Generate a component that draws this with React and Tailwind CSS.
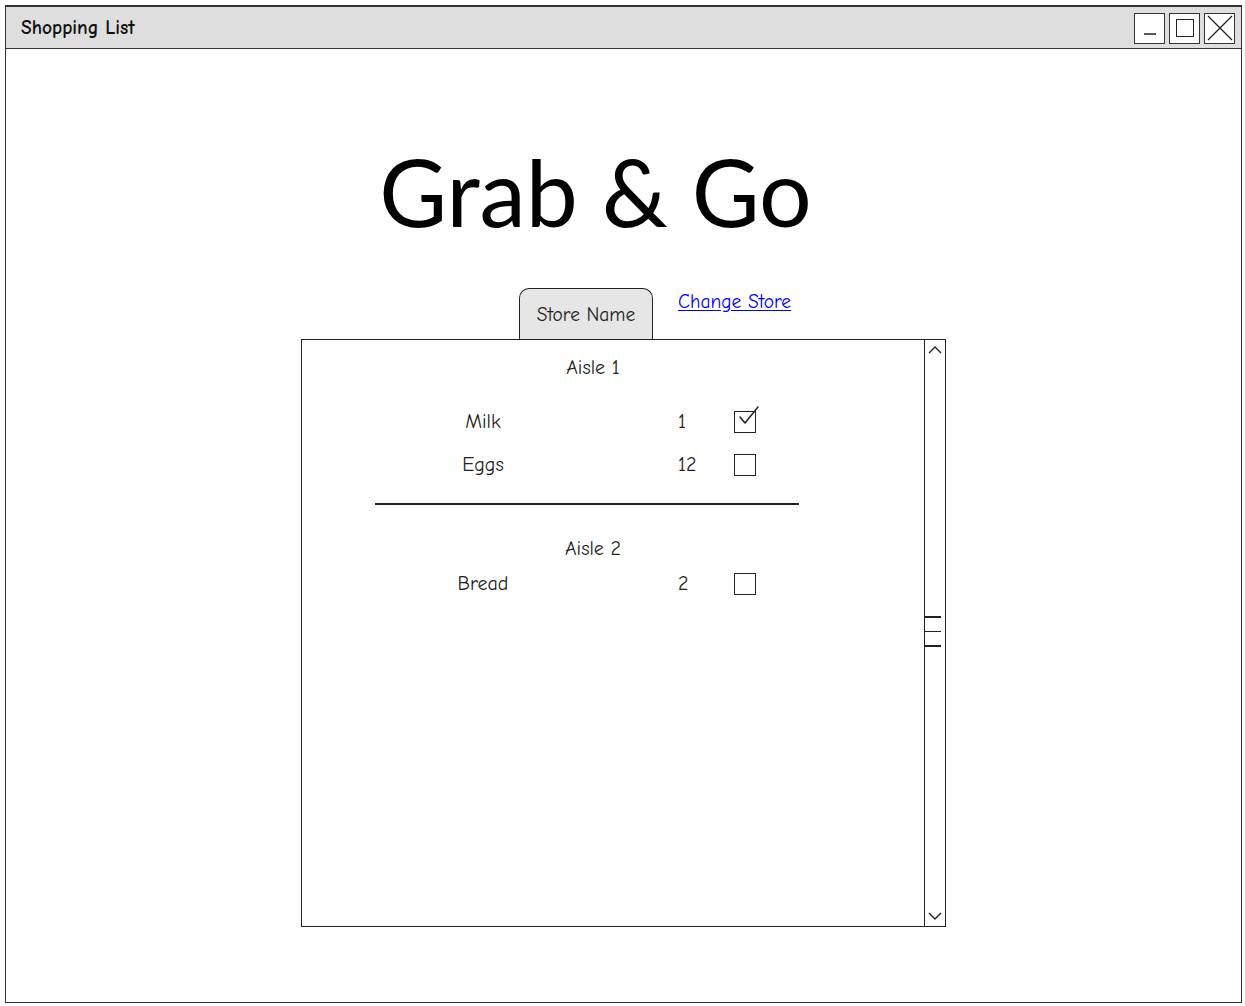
import React from "react";

const sketch = { fontFamily: '"Comic Sans MS", "Comic Neue", "DejaVu Sans", sans-serif' };

const Checkbox = ({ checked }) => (
  <div className="relative w-[22px] h-[22px] border-[1.5px] border-[#222] bg-white">
    {checked && (
      <svg className="absolute -top-[6px] left-[2px]" width="22" height="24" viewBox="0 0 22 24" fill="none">
        <path d="M3 11 L8 17 L21 1" stroke="#222" strokeWidth="1.5" strokeLinecap="round" strokeLinejoin="round" />
      </svg>
    )}
  </div>
);

const Item = ({ name, qty, checked }) => (
  <div className="flex items-center h-[43px] text-[20px] text-[#222]">
    <div className="w-[216px] text-center">{name}</div>
    <div className="w-[56px] ml-[87px]">{qty}</div>
    <Checkbox checked={checked} />
  </div>
);

const WinButton = ({ children }) => (
  <div className="w-[31px] h-[31px] border-[1.5px] border-[#333] bg-white flex items-center justify-center">
    {children}
  </div>
);

export default function App() {
  return (
    <div className="w-[1245px] h-[1006px] bg-white pt-[5px] pl-[5px] pr-[3px] pb-[3px]" style={sketch}>
      <div className="h-full border border-[#333] border-t-2 flex flex-col">
        {/* Title bar */}
        <div className="h-[42px] bg-[#dedede] border-b border-[#333] flex items-center justify-between pl-[15px] pr-[6px]">
          <span className="text-[19.5px] font-bold text-[#111]">Shopping List</span>
          <div className="flex gap-[4px] pt-[1px]">
            <WinButton>
              <svg width="20" height="20" viewBox="0 0 20 20">
                <path d="M4 16 H16" stroke="#222" strokeWidth="1.5" />
              </svg>
            </WinButton>
            <WinButton>
              <div className="w-[18px] h-[18px] border-[1.5px] border-[#222]" />
            </WinButton>
            <WinButton>
              <svg width="28" height="28" viewBox="0 0 28 28">
                <path d="M2 2 L26 26 M26 2 L2 26" stroke="#222" strokeWidth="1.3" />
              </svg>
            </WinButton>
          </div>
        </div>

        {/* Content */}
        <div className="flex-1 flex flex-col">
          <h1
            className="mt-[96px] h-[93px] leading-none text-[93px] text-black text-center pr-[56px]"
            style={{ fontFamily: "Lato, sans-serif" }}
          >
            Grab &amp; Go
          </h1>

          <div className="flex items-start mt-[50px] ml-[513px]">
            <div className="w-[134px] h-[51px] rounded-t-[10px] border-[1.5px] border-b-0 border-[#222] bg-[#e6e6e6] flex items-center justify-center pt-[1px] text-[19.5px] text-[#222]">
              Store Name
            </div>
            <a href="#" className="ml-[25px] -mt-[1px] text-[19.5px] text-[#0000ff] underline underline-offset-2">
              Change Store
            </a>
          </div>

          {/* List box */}
          <div className="ml-[295px] w-[645px] h-[588px] border border-[#222] flex">
            <div className="flex-1">
              <div className="ml-[73px] w-[424px] pt-[16px]">
                <div className="h-[24px] leading-[24px] text-[20px] text-center pl-[12px] text-[#222]">Aisle 1</div>
                <div className="mt-[20px]">
                  <Item name="Milk" qty="1" checked />
                  <Item name="Eggs" qty="12" />
                </div>
                <div className="mt-[17px] h-[1.5px] bg-[#222]" />
                <div className="mt-[32px] h-[24px] leading-[24px] text-[20px] text-center pl-[12px] text-[#222]">Aisle 2</div>
                <div className="mt-[2px]">
                  <Item name="Bread" qty="2" />
                </div>
              </div>
            </div>

            {/* Scrollbar */}
            <div className="w-[21px] border-l border-[#222] flex flex-col items-center">
              <svg className="mt-[5px]" width="14" height="9" viewBox="0 0 14 9" fill="none">
                <path d="M1 8 L7 2 L13 8" stroke="#222" strokeWidth="1.4" />
              </svg>
              <div className="mt-[262px] w-full flex flex-col gap-[13px] pr-[4px]">
                <div className="h-[1.5px] bg-[#222]" />
                <div className="h-[1.5px] bg-[#222]" />
                <div className="h-[1.5px] bg-[#222]" />
              </div>
              <div className="flex-1" />
              <svg className="mb-[5px]" width="14" height="9" viewBox="0 0 14 9" fill="none">
                <path d="M1 1 L7 7 L13 1" stroke="#222" strokeWidth="1.4" />
              </svg>
            </div>
          </div>
        </div>
      </div>
    </div>
  );
}
